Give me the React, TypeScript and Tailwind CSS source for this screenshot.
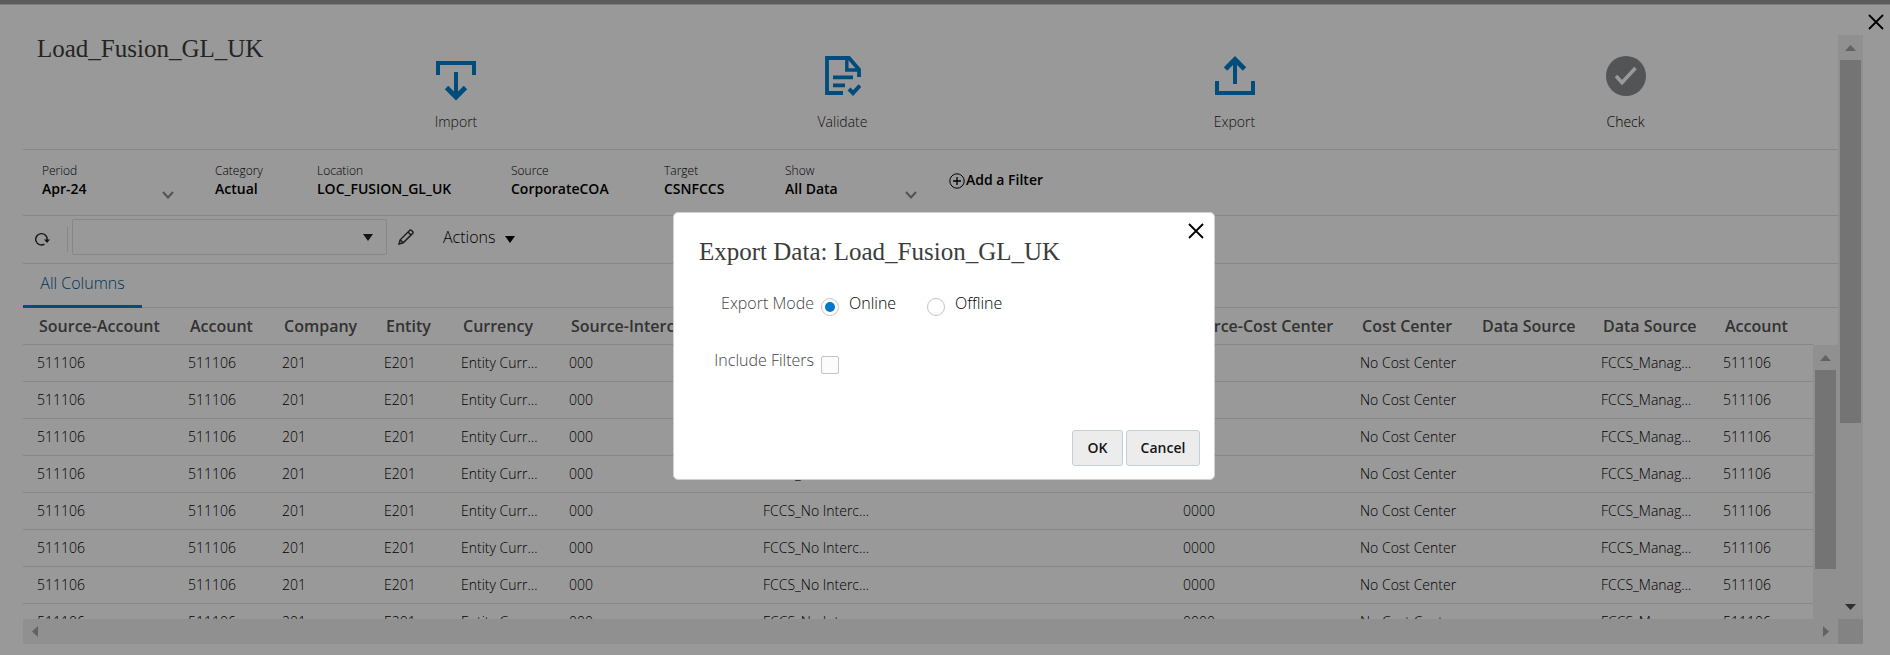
import React, { useState } from "react";

const columns: { header: string; value: string; width: string }[] = [
  { header: "Source-Account", value: "511106", width: "w-[151px]" },
  { header: "Account", value: "511106", width: "w-[94px]" },
  { header: "Company", value: "201", width: "w-[102px]" },
  { header: "Entity", value: "E201", width: "w-[77px]" },
  { header: "Currency", value: "Entity Curr…", width: "w-[108px]" },
  { header: "Source-Intercompany", value: "000", width: "w-[194px]" },
  { header: "", value: "FCCS_No Interc…", width: "" },
  { header: "Source-Cost Center", value: "0000", width: "w-[177px]" },
  { header: "Cost Center", value: "No Cost Center", width: "w-[120px]" },
  { header: "Data Source", value: "", width: "w-[121px]" },
  { header: "Data Source", value: "FCCS_Manag…", width: "w-[122px]" },
  { header: "Account", value: "511106", width: "w-[104px]" },
];

const rows = [0, 1, 2, 3, 4, 5, 6, 7];

function CloseIcon() {
  return (
    <svg width="16" height="16" viewBox="0 0 16 16" fill="none" stroke="currentColor" strokeWidth="1.8" aria-hidden="true">
      <path d="M1 1L15 15M15 1L1 15" />
    </svg>
  );
}

function ImportIcon() {
  return (
    <svg width="40" height="40" viewBox="0 0 40 40" fill="none" stroke="currentColor" strokeWidth="4" aria-hidden="true">
      <path d="M2 14V2H38V14" />
      <path d="M20 11V36" />
      <path d="M10.5 26.5L20 36L29.5 26.5" strokeWidth="4.8" />
    </svg>
  );
}

function ValidateIcon() {
  return (
    <svg width="36" height="40" viewBox="0 0 36 40" fill="none" stroke="currentColor" strokeWidth="3.8" aria-hidden="true">
      <path d="M18 37H2V2H24L34 13.4V21" />
      <path d="M21.8 2V14H34" strokeWidth="3.4" />
      <path d="M8 21.4H28M8 29.4H20" />
      <path d="M24 33L28 37L35 29.5" strokeWidth="4" />
    </svg>
  );
}

function ExportIcon() {
  return (
    <svg width="40" height="40" viewBox="0 0 40 40" fill="none" stroke="currentColor" strokeWidth="4" aria-hidden="true">
      <path d="M2 25V37H38V25" />
      <path d="M20 28V4" />
      <path d="M10.5 13L20 3.5L29.5 13" strokeWidth="4.8" />
    </svg>
  );
}

function CheckIcon() {
  return (
    <svg width="40" height="40" viewBox="0 0 40 40" aria-hidden="true">
      <circle cx="20" cy="20" r="20" fill="#8b8c8e" />
      <path d="M10 20L16 26.5L29.5 12" fill="none" stroke="#ffffff" strokeWidth="3.6" />
    </svg>
  );
}

function Chevron() {
  return (
    <svg width="12" height="8" viewBox="0 0 12 8" fill="none" stroke="#85898f" strokeWidth="1.9" aria-hidden="true">
      <path d="M1 1L6 6.5L11 1" />
    </svg>
  );
}

function Triangle({ dir }: { dir: "up" | "down" | "left" | "right" }) {
  const d = {
    up: "M0 6L5.5 0L11 6Z",
    down: "M0 0L11 0L5.5 6Z",
    left: "M6 0V11L0 5.5Z",
    right: "M0 0L6 5.5L0 11Z",
  }[dir];
  const flat = dir === "up" || dir === "down";
  return (
    <svg
      width={flat ? 11 : 6}
      height={flat ? 6 : 11}
      viewBox={flat ? "0 0 11 6" : "0 0 6 11"}
      fill="currentColor"
      aria-hidden="true"
    >
      <path d={d} />
    </svg>
  );
}

function Caret() {
  return (
    <svg width="10" height="7" viewBox="0 0 10 7" fill="currentColor" aria-hidden="true">
      <path d="M0 0H10L5 7Z" />
    </svg>
  );
}

function Step({ icon, label, low, grey }: { icon: React.ReactNode; label: string; low?: boolean; grey?: boolean }) {
  return (
    <button type="button" className="flex flex-col items-center">
      <span className={"flex h-[77px] text-[#007fcc] " + (low ? "pt-[26px]" : "pt-[21px]")}>{icon}</span>
      <span className={"text-sm leading-5 font-light " + (grey ? "text-black" : "text-[#222]")}>{label}</span>
    </button>
  );
}

function Field({ label, value, className }: { label: string; value: string; className: string }) {
  return (
    <div className={"shrink-0 " + className}>
      <div className="text-xs leading-4 font-light">{label}</div>
      <div className="text-sm leading-5 font-semibold">{value}</div>
    </div>
  );
}

function SelectField({ id, label, value, className }: { id: string; label: string; value: string; className: string }) {
  return (
    <div className={"shrink-0 " + className}>
      <label htmlFor={id} className="block text-xs leading-4 font-light">
        {label}
      </label>
      <div className="flex w-[132px] items-center">
        <select id={id} className="h-5 min-w-0 flex-1 appearance-none bg-transparent text-sm leading-5 font-semibold">
          <option>{value}</option>
        </select>
        <span className="pt-[11px]">
          <Chevron />
        </span>
      </div>
    </div>
  );
}

function Workbench() {
  return (
    <div className="flex h-screen flex-col bg-white">
      <div className="h-[5px] shrink-0 border-b border-[#d0d0d0] bg-[#999999]" />
      <div className="flex h-[30px] shrink-0 justify-end pt-[9px] pr-[6px]">
        <button type="button" aria-label="Close" className="h-4 text-black">
          <CloseIcon />
        </button>
      </div>
      <div className="mr-[27px] mb-[11px] ml-[23px] flex min-h-0 flex-1 flex-col">
        <div className="flex min-h-0 flex-1">
          <main className="flex min-w-0 flex-1 flex-col">
            <header className="flex h-[115px] shrink-0 border-b border-[#e2e2e2]">
              <h1 className="w-[242px] shrink-0 pl-[14px] font-['Liberation_Serif',serif] text-[25px] leading-7 text-[#3c3c3c]">
                Load_Fusion_GL_UK
              </h1>
              <nav className="mr-[18px] grid flex-1 grid-cols-[382fr_391fr_393fr_389fr]">
                <Step icon={<ImportIcon />} label="Import" low />
                <Step icon={<ValidateIcon />} label="Validate" />
                <Step icon={<ExportIcon />} label="Export" />
                <Step icon={<CheckIcon />} label="Check" grey />
              </nav>
            </header>

            <section className="flex h-[66px] shrink-0 border-b border-[#e2e2e2] pt-[13px] pl-[19px] text-black">
              <SelectField id="period" label="Period" value="Apr-24" className="w-[173px]" />
              <Field label="Category" value="Actual" className="w-[102px]" />
              <Field label="Location" value="LOC_FUSION_GL_UK" className="w-[194px]" />
              <Field label="Source" value="CorporateCOA" className="w-[153px]" />
              <Field label="Target" value="CSNFCCS" className="w-[121px]" />
              <SelectField id="show" label="Show" value="All Data" className="w-[164px]" />
              <button type="button" className="mt-[7px] flex h-5 items-center gap-px text-sm leading-5 font-semibold">
                <svg width="16" height="18" viewBox="0 0 16 18" fill="none" stroke="currentColor" aria-hidden="true">
                  <circle cx="8" cy="10" r="7.2" />
                  <path d="M8 6V14M4 10H12" strokeWidth="1.3" />
                </svg>
                Add a Filter
              </button>
            </section>

            <section className="flex h-12 shrink-0 items-start border-b border-[#e2e2e2] text-black">
              <button type="button" aria-label="Refresh" className="mt-[16px] ml-[12px]">
                <svg width="16" height="16" viewBox="0 0 16 16" fill="none" stroke="#222" strokeWidth="1.4" aria-hidden="true">
                  <path d="M9.4 12.2A5.7 5.7 0 1 1 12.1 8" />
                  <path d="M9 7.4H15L12 11Z" fill="#222" stroke="none" />
                </svg>
              </button>
              <span className="mt-[11px] ml-4 h-[25px] w-px bg-[#e0e0e0]" />
              <div className="relative mt-[3px] ml-1 w-[315px]">
                <select
                  aria-label="View"
                  className="h-9 w-full appearance-none rounded-xs border border-[#dfe1e3] bg-transparent text-base"
                >
                  <option value=""></option>
                </select>
                <span className="pointer-events-none absolute inset-y-0 right-[14px] flex items-center text-[#222]">
                  <Caret />
                </span>
              </div>
              <button type="button" aria-label="Edit" className="mt-[13px] ml-[11px]">
                <svg width="16" height="16" viewBox="0 0 16 16" fill="none" stroke="#333" strokeWidth="1.5" aria-hidden="true">
                  <path d="M1 15L2.2 10.8L11.8 1.2Q12.5 .7 13.2 1.2L14.8 2.8Q15.3 3.5 14.8 4.2L5.2 13.8Z" />
                  <path d="M10 3L13 6M2.2 10.8L5.2 13.8" />
                </svg>
              </button>
              <button type="button" className="mt-[9px] ml-[29px] flex items-center gap-[10px] text-base leading-6 font-light text-black">
                Actions
                <span className="pt-[5px]">
                  <Caret />
                </span>
              </button>
            </section>

            <section className="flex h-[44px] shrink-0 border-b border-[#e2e2e2]">
              <button
                type="button"
                className="-mb-px h-[44px] w-[119px] border-b-3 border-[#007fcc] pb-1 text-base leading-6 font-light text-[#005694]"
              >
                All Columns
              </button>
            </section>

            <div className="flex min-h-0 flex-1 overflow-hidden">
              <div className="min-w-0 flex-1 overflow-hidden">
                <table className="w-full table-fixed border-collapse text-left">
                  <thead>
                    <tr className="h-9 border-b border-[#e2e2e2]">
                      {columns.map((c, i) => (
                        <th
                          key={i}
                          className={"p-0 pl-4 text-base leading-6 font-semibold whitespace-nowrap text-[#555] " + c.width}
                        >
                          {c.header}
                        </th>
                      ))}
                    </tr>
                  </thead>
                  <tbody>
                    {rows.map((r) => (
                      <tr key={r} className="h-[37px] border-b border-[#e2e2e2]">
                        {columns.map((c, i) => (
                          <td key={i} className="p-0 pl-[14px] text-sm leading-5 font-light whitespace-nowrap text-black">
                            {c.value}
                          </td>
                        ))}
                      </tr>
                    ))}
                  </tbody>
                </table>
              </div>
              <div className="mt-[37px] flex w-[25px] shrink-0 flex-col bg-[#f0f0f0]">
                <div className="flex h-[25px] shrink-0 items-center justify-center text-[#a3a3a3]">
                  <Triangle dir="up" />
                </div>
                <div className="min-h-0 flex-1 px-[2px]">
                  <div className="h-4/5 bg-[#c1c1c1]" />
                </div>
              </div>
            </div>
          </main>

          <div className="flex w-[25px] shrink-0 flex-col bg-[#f0f0f0]">
            <div className="flex h-[25px] shrink-0 items-center justify-center text-[#a3a3a3]">
              <Triangle dir="up" />
            </div>
            <div className="min-h-0 flex-1 px-[2px]">
              <div className="h-[68%] bg-[#c1c1c1]" />
            </div>
            <div className="flex h-[25px] shrink-0 items-center justify-center text-[#505050]">
              <Triangle dir="down" />
            </div>
          </div>
        </div>
        <div className="flex h-[25px] shrink-0">
          <div className="flex flex-1 items-center justify-between bg-[#f0f0f0] px-[9px] text-[#a3a3a3]">
            <Triangle dir="left" />
            <Triangle dir="right" />
          </div>
          <div className="w-[25px] bg-[#dadada]" />
        </div>
      </div>
    </div>
  );
}

const radioClass =
  "mt-[7px] h-[18px] w-[18px] appearance-none rounded-full border border-[#c4c4c4] bg-white bg-clip-content p-[3px] checked:bg-[#0079c8]";

function ExportDialog() {
  const [mode, setMode] = useState("online");
  const [filters, setFilters] = useState(false);
  const button = "h-9 rounded-[3px] border border-[#c4ced7] bg-[#ececec] text-sm font-semibold text-[#161616] ";
  return (
    <div
      role="dialog"
      aria-labelledby="dialog-title"
      className="w-[542px] rounded-[5px] border border-[#d0d0d0] bg-white"
    >
      <div className="flex h-[25px] justify-end pt-[10px] pr-[10px]">
        <button type="button" aria-label="Close dialog" className="h-4 text-black">
          <CloseIcon />
        </button>
      </div>
      <h2 id="dialog-title" className="pl-[25px] font-['Liberation_Serif',serif] text-[25px] leading-7 text-[#3c3c3c]">
        Export Data: Load_Fusion_GL_UK
      </h2>
      <form className="mt-[25px]">
        <div role="radiogroup" aria-labelledby="mode-label" className="flex h-[57px] items-start text-base leading-6 font-light">
          <span id="mode-label" className="w-[140px] text-right text-[#444]">
            Export Mode
          </span>
          <label className="ml-[7px] flex w-[106px] gap-[10px] text-black">
            <input
              type="radio"
              name="mode"
              checked={mode === "online"}
              onChange={() => setMode("online")}
              className={radioClass}
            />
            Online
          </label>
          <label className="flex gap-[10px] text-black">
            <input
              type="radio"
              name="mode"
              checked={mode === "offline"}
              onChange={() => setMode("offline")}
              className={radioClass}
            />
            Offline
          </label>
        </div>
        <div className="flex h-[82px] items-start text-base leading-6 font-light">
          <label htmlFor="filters" className="w-[140px] text-right text-[#444]">
            Include Filters
          </label>
          <input
            id="filters"
            type="checkbox"
            checked={filters}
            onChange={(e) => setFilters(e.target.checked)}
            className="mt-2 ml-[7px] h-[18px] w-[18px] appearance-none rounded-xs border border-[#c4c4c4] bg-[#fcfcfc] checked:bg-[#0079c8]"
          />
        </div>
        <div className="flex justify-end gap-[3px] pr-[14px] pb-[13px]">
          <button type="button" className={button + "w-[51px]"}>
            OK
          </button>
          <button type="button" className={button + "w-[74px]"}>
            Cancel
          </button>
        </div>
      </form>
    </div>
  );
}

export default function App() {
  return (
    <div className="relative overflow-hidden font-['Open_Sans',sans-serif]">
      <Workbench />
      <div className="absolute inset-0 flex items-start justify-center bg-black/40 pt-[212px] pr-[2px]">
        <ExportDialog />
      </div>
    </div>
  );
}
